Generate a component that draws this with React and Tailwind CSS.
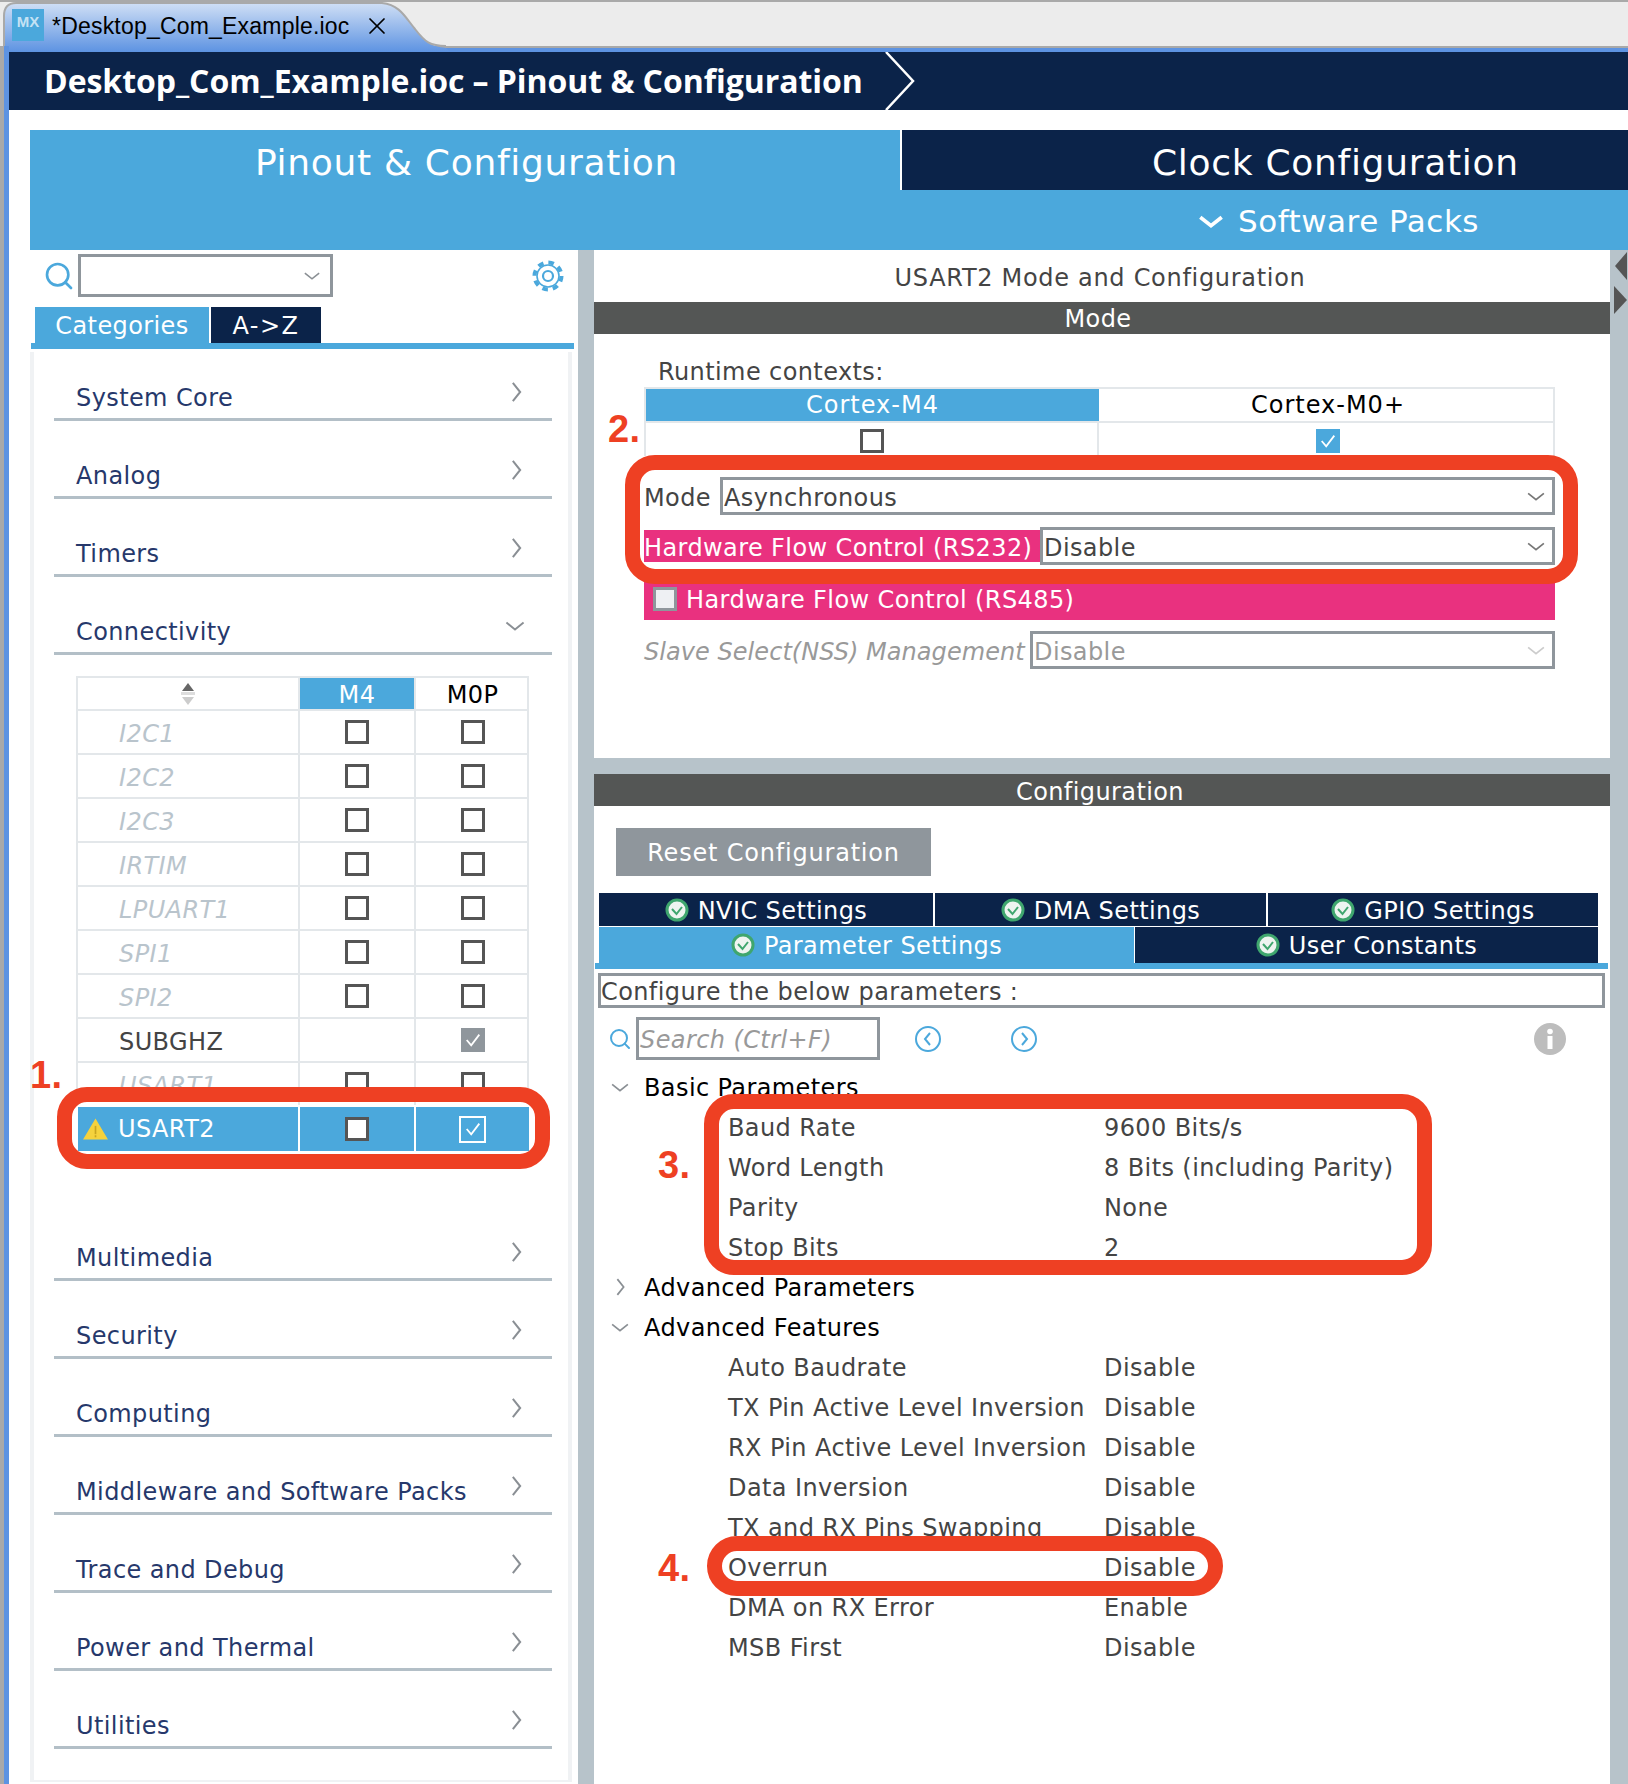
import React from "react";
import { Search, X } from "lucide-react";

/* small drawings */
function Chev({ dir = "right", className = "", color = "#8a8f94", sw = 2.2 }) {
  const d = {
    right: "M3 2 L11 12 L3 22",
    down: "M2 3 L12 11 L22 3",
  }[dir];
  const vb = dir === "right" ? "0 0 14 24" : "0 0 24 14";
  return (
    <svg viewBox={vb} className={className} fill="none" stroke={color} strokeWidth={sw}>
      <path d={d} />
    </svg>
  );
}

function Box({ state = "off", className = "" }) {
  if (state === "grey")
    return (
      <div className={`flex h-[24px] w-[24px] items-center justify-center bg-[#8f969c] ${className}`}>
        <Tick color="#fff" />
      </div>
    );
  if (state === "blue")
    return (
      <div className={`flex h-[24px] w-[24px] items-center justify-center bg-[#4ba8dc] ${className}`}>
        <Tick color="#fff" />
      </div>
    );
  if (state === "onblue")
    return (
      <div className={`flex h-[27px] w-[27px] items-center justify-center border-[2px] border-white ${className}`}>
        <Tick color="#fff" />
      </div>
    );
  return <div className={`h-[24px] w-[24px] border-[3px] border-[#555] ${className}`} />;
}

function Tick({ color }) {
  return (
    <svg viewBox="0 0 20 20" className="h-[18px] w-[18px]" fill="none" stroke={color} strokeWidth="2">
      <path d="M3 10 L8 16 L17 4" />
    </svg>
  );
}

function GreenOk() {
  return (
    <svg viewBox="0 0 24 24" className="h-[24px] w-[24px] shrink-0">
      <circle cx="12" cy="12" r="10" fill="#eef4f0" stroke="#3fa66e" strokeWidth="3" />
      <path d="M7 11 L11.5 16 L17 9" fill="none" stroke="#3fa66e" strokeWidth="2" />
    </svg>
  );
}

function NavDot({ left }) {
  return (
    <svg viewBox="0 0 28 28" className="h-[28px] w-[28px]" fill="none" stroke="#4ba8dc" strokeWidth="2">
      <circle cx="14" cy="14" r="12" />
      <path d={left ? "M16 8 L11 14 L16 20" : "M12 8 L17 14 L12 20"} />
    </svg>
  );
}

function Gear() {
  return (
    <svg viewBox="0 0 32 32" className="ml-auto h-[32px] w-[32px]" fill="none" stroke="#4ba8dc">
      <circle cx="16" cy="16" r="13.5" strokeWidth="4" strokeDasharray="5.6 5" />
      <circle cx="16" cy="16" r="11" strokeWidth="1.6" />
      <circle cx="16" cy="16" r="5" strokeWidth="2.2" />
    </svg>
  );
}

function Select({ value, className = "", textClass = "text-[#444]", chevColor = "#777" }) {
  return (
    <div className={`flex h-[38px] items-center justify-between border-[3px] border-[#8f969c] bg-white pl-[1px] pr-[6px] ${className}`}>
      <span className={`pt-[3px] ${textClass}`}>{value}</span>
      <Chev dir="down" className="h-[11px] w-[20px]" color={chevColor} />
    </div>
  );
}

function Category({ name, open, className = "" }) {
  return (
    <div className={`ml-[20px] mr-[16px] flex h-[69px] items-end justify-between border-b-[3px] border-[#b3bfc7] pb-[8px] pl-[22px] pr-[29px] ${className}`}>
      <span className="text-[#26386b]">{name}</span>
      {open ? (
        <Chev dir="down" className="-mr-[3px] mb-[12px] h-[12px] w-[22px]" />
      ) : (
        <Chev className="mb-[7px] h-[22px] w-[13px]" />
      )}
    </div>
  );
}

const peripherals = [
  ["I2C1", "off", "off"],
  ["I2C2", "off", "off"],
  ["I2C3", "off", "off"],
  ["IRTIM", "off", "off"],
  ["LPUART1", "off", "off"],
  ["SPI1", "off", "off"],
  ["SPI2", "off", "off"],
  ["SUBGHZ", null, "grey"],
  ["USART1", "off", "off"],
];

function PeripheralTable() {
  const cols = "grid w-[451px] grid-cols-[222px_116px_113px]";
  const cell = "flex items-center justify-center border-r-[2px] border-[#e3e7ea] last:border-r-0";
  return (
    <div className="ml-[42px] mt-[21px] w-[453px]">
      <div className="border-[2px] border-b-0 border-[#e3e7ea]">
        <div className={`${cols} h-[33px] border-b-[2px] border-[#e3e7ea]`}>
          <div className={cell}>
            <svg viewBox="0 0 18 24" className="h-[24px] w-[18px]">
              <path d="M9 1 L15 9 H3 Z" fill="#666" />
              <path d="M9 23 L15 15 H3 Z" fill="#ccc" />
              <rect x="2" y="10" width="14" height="3" fill="#ddd" />
            </svg>
          </div>
          <div className={`${cell} bg-[#4ba8dc] pt-[2px] text-white`}>M4</div>
          <div className={`${cell} pt-[2px] text-black`}>M0P</div>
        </div>
        {peripherals.map(([name, a, b]) => (
          <div key={name} className={`${cols} h-[44px] border-b-[2px] border-[#e3e7ea]`}>
            <div className={`${cell} !justify-start pl-[41px] pt-[3px] ${name === "SUBGHZ" ? "text-[#444]" : "italic text-[#b9c4cc]"}`}>
              {name}
            </div>
            <div className={cell}>{a && <Box state={a} />}</div>
            <div className={cell}>
              <Box state={b} />
            </div>
          </div>
        ))}
      </div>
      <div className={`${cols} ml-[2px] h-[44px] bg-[#4ba8dc] text-white shadow-[0_0_0_5px_#fff]`}>
        <div className={`${cell} !justify-start !border-white gap-[9px] pl-[4px]`}>
          <svg viewBox="0 0 26 22" className="h-[24px] w-[27px]">
            <path d="M13 1 L25 21 H1 Z" fill="#f5d23d" />
            <rect x="12.2" y="8" width="1.6" height="8" fill="#c9a520" />
            <rect x="12.2" y="17" width="1.6" height="2" fill="#c9a520" />
          </svg>
          <span>USART2</span>
        </div>
        <div className={`${cell} !border-white`}>
          <Box className="bg-white" />
        </div>
        <div className={cell}>
          <Box state="onblue" />
        </div>
      </div>
    </div>
  );
}

function TabBtn({ label, active, className = "" }) {
  return (
    <div className={`flex items-center justify-center gap-[9px] text-white ${active ? "bg-[#4ba8dc]" : "bg-[#0b2349]"} ${className}`}>
      <GreenOk />
      <span className="pt-[2px]">{label}</span>
    </div>
  );
}

function Group({ name, open }) {
  return (
    <div className="flex h-[40px] items-center text-black">
      <div className="flex w-[50px] justify-center pl-[2px]">
        {open ? <Chev dir="down" className="h-[11px] w-[20px]" /> : <Chev className="h-[20px] w-[11px]" />}
      </div>
      <span className="pt-[1px]">{name}</span>
    </div>
  );
}

function Param({ name, value }) {
  return (
    <div className="flex h-[40px] items-center pt-[1px] text-[#444]">
      <span className="ml-[134px] w-[376px]">{name}</span>
      <span>{value}</span>
    </div>
  );
}

function Annot({ className }) {
  return <div className={`pointer-events-none absolute rounded-[30px] border-[15px] border-[#ee4023] ${className}`} />;
}

function Num({ children, className }) {
  return (
    <div className={`pointer-events-none absolute font-['Liberation_Sans',sans-serif] text-[38px] font-bold leading-none text-[#ee4023] ${className}`}>
      {children}
    </div>
  );
}

export default function App() {
  return (
    <div className="relative h-[1784px] w-[1628px] overflow-hidden bg-white font-['DejaVu_Sans',sans-serif] text-[24px] leading-none tracking-[0.4px]">
      {/* editor tab */}
      <div className="relative h-[52px] border-t-[2px] border-[#a9a9a9] bg-[#ececec]">
        <div className="absolute inset-x-0 top-[44px] h-[6px] border-t-[2px] border-[#a9a9a9] bg-[#5d93e2]" />
        <svg viewBox="0 0 450 50" className="absolute left-0 top-0 h-[50px] w-[450px]">
          <defs>
            <linearGradient id="tabfill" x1="0" y1="0" x2="0" y2="1">
              <stop offset="0" stopColor="#d0dff5" />
              <stop offset="1" stopColor="#5d93e2" />
            </linearGradient>
          </defs>
          <path d="M4 50 V14 Q4 1 16 1 H382 C400 3 405 15 415 27 C425 40 430 44 446 46 L450 50 Z" fill="url(#tabfill)" />
          <path d="M4 46 V14 Q4 1 16 1 H382 C400 3 405 15 415 27 C425 40 430 44 446 44" fill="none" stroke="#a9a9a9" strokeWidth="2" />
        </svg>
        <div className="relative flex h-[46px] items-center pl-[12px] font-['Liberation_Sans',sans-serif] text-[23px] tracking-[0.2px] text-black">
          <div className="flex h-[32px] w-[32px] items-start justify-center bg-[#4ba8dc] pt-[5px] text-[15px] font-bold tracking-normal text-[#c4e2f4]">MX</div>
          <span className="ml-[8px] mt-[3px]">*Desktop_Com_Example.ioc</span>
          <X className="ml-[13px] mt-[1px] h-[28px] w-[28px]" strokeWidth={1.5} />
        </div>
      </div>

      <div className="absolute bottom-0 left-0 top-[46px] w-[9px] border-l-[4px] border-[#a9a9a9] bg-[#5d93e2]" />

      {/* breadcrumb */}
      <div className="relative ml-[9px] flex h-[58px] items-center bg-[#0b2349] pl-[35px] font-['Open_Sans',sans-serif] text-[32px] font-bold tracking-[-0.05px] text-white">
        <span>Desktop_Com_Example.ioc – Pinout &amp; Configuration</span>
        <svg viewBox="0 0 30 58" className="absolute left-[876px] top-0 h-[58px] w-[30px]" fill="none" stroke="#fff" strokeWidth="2.5">
          <path d="M1 0 L28 29 L1 58" />
        </svg>
      </div>

      <div className="ml-[30px] mt-[20px]">
        {/* perspective tabs */}
        <div className="h-[120px] bg-[#4ba8dc] text-[36px] tracking-[0.7px] text-white">
          <div className="flex h-[60px]">
            <div className="flex w-[872px] items-center justify-center border-r-[2px] border-white pl-[3px] pt-[6px]">Pinout &amp; Configuration</div>
            <div className="flex flex-1 items-center bg-[#0b2349] pl-[250px] pt-[6px]">Clock Configuration</div>
          </div>
          <div className="flex h-[60px] items-center justify-end gap-[14px] pr-[149px] pt-[2px] text-[31px] tracking-[0.5px]">
            <Chev dir="down" color="#fff" sw={3.4} className="h-[15px] w-[26px]" />
            <span>Software Packs</span>
          </div>
        </div>

        <div className="flex h-[1534px] bg-[#b7c3ca]">
          {/* left: categories */}
          <div className="w-[548px] bg-white">
            <div className="flex h-[57px] items-center pb-[6px] pl-[13px] pr-[14px]">
              <Search className="h-[32px] w-[32px] text-[#4ba8dc]" strokeWidth={2} />
              <div className="ml-[3px] flex h-[43px] w-[255px] items-center justify-end border-[3px] border-[#8f969c] pr-[8px]">
                <Chev dir="down" className="h-[10px] w-[20px]" />
              </div>
              <Gear />
            </div>
            <div className="flex h-[36px] pl-[5px] text-white">
              <div className="flex w-[174px] items-center justify-center bg-[#4ba8dc] pt-[2px]">Categories</div>
              <div className="ml-[2px] flex w-[110px] items-center justify-center bg-[#0b2349] pt-[2px] tracking-[1.5px]">A-&gt;Z</div>
            </div>
            <div className="ml-[1px] mr-[4px] h-[6px] bg-[#4ba8dc]" />
            <div className="mr-[6px] mt-[3px] h-[1430px] border-x-[4px] border-b-[2px] border-[#f0f2f4] pr-0">
              <div className="flex flex-col gap-[9px]">
                <Category name="System Core" />
                <Category name="Analog" />
                <Category name="Timers" />
                <div className="mb-[52px]">
                  <Category name="Connectivity" open />
                  <PeripheralTable />
                </div>
                <Category name="Multimedia" />
                <Category name="Security" />
                <Category name="Computing" />
                <Category name="Middleware and Software Packs" />
                <Category name="Trace and Debug" />
                <Category name="Power and Thermal" />
                <Category name="Utilities" />
              </div>
            </div>
          </div>

          {/* right: mode and configuration */}
          <div className="ml-[16px] flex w-[1016px] flex-col gap-[16px]">
            <div className="h-[508px] bg-white">
              <div className="flex h-[52px] items-center justify-center pr-[4px] pt-[4px] tracking-[0.7px] text-[#444]">USART2 Mode and Configuration</div>
              <div className="flex h-[32px] items-center justify-center bg-[#545655] pr-[8px] pt-[2px] text-white">Mode</div>
              <div className="pl-[50px]">
                <div className="flex h-[53px] items-end pb-[3px] pl-[14px] text-[#444]">Runtime contexts:</div>
                <div className="w-[911px]">
                  <div className="grid h-[34px] grid-cols-[453px_458px] border-[2px] border-b-0 border-[#e3e7ea]">
                    <div className="flex items-center justify-center bg-[#4ba8dc] tracking-[1px] text-white">Cortex-M4</div>
                    <div className="flex items-center justify-center tracking-[1px] text-black">Cortex-M0+</div>
                  </div>
                  <div className="grid h-[35px] grid-cols-[453px_458px] border-x-[2px] border-t-[2px] border-[#e3e7ea]">
                    <div className="flex items-center justify-center border-r-[2px] border-[#e3e7ea] pt-[3px]">
                      <Box />
                    </div>
                    <div className="flex items-center justify-center pt-[3px]">
                      <Box state="blue" />
                    </div>
                  </div>
                </div>
                <div className="mt-[21px] flex w-[911px] items-center text-[#444]">
                  <span className="w-[76px] pt-[3px]">Mode</span>
                  <Select value="Asynchronous" className="flex-1" />
                </div>
                <div className="mt-[12px] flex w-[911px] items-center">
                  <span className="flex h-[32px] w-[396px] items-center whitespace-nowrap bg-[#e9317f] pt-[3px] text-white">Hardware Flow Control (RS232)</span>
                  <Select value="Disable" className="flex-1" />
                </div>
                <div className="mt-[13px] flex h-[42px] w-[911px] items-center gap-[9px] bg-[#e9317f] pl-[9px] text-white">
                  <div className="h-[24px] w-[24px] border-[3px] border-[#8f969c] bg-[#eef0f3]" />
                  <span className="pt-[2px]">Hardware Flow Control (RS485)</span>
                </div>
                <div className="mt-[11px] flex w-[911px] items-center">
                  <span className="w-[386px] whitespace-nowrap pt-[3px] italic tracking-[0.05px] text-[#999]">Slave Select(NSS) Management</span>
                  <Select value="Disable" className="flex-1" textClass="text-[#999]" chevColor="#ccc" />
                </div>
              </div>
            </div>

            <div className="flex-1 bg-white">
              <div className="flex h-[32px] items-center justify-center bg-[#545655] pr-[4px] pt-[3px] text-white">Configuration</div>
              <div className="ml-[22px] mt-[22px] flex h-[48px] w-[315px] items-center justify-center bg-[#8f969c] pt-[2px] tracking-[0.8px] text-white">Reset Configuration</div>
              <div className="mt-[17px] flex gap-[2px] pl-[5px]">
                <TabBtn label="NVIC Settings" className="h-[33px] w-[334px]" />
                <TabBtn label="DMA Settings" className="h-[33px] w-[331px]" />
                <TabBtn label="GPIO Settings" className="h-[33px] w-[330px]" />
              </div>
              <div className="mt-[1px] flex gap-[1px] pl-[5px]">
                <TabBtn label="Parameter Settings" active className="h-[36px] w-[535px]" />
                <TabBtn label="User Constants" className="h-[36px] w-[463px]" />
              </div>
              <div className="ml-[1px] h-[6px] w-[1013px] bg-[#4ba8dc]" />
              <div className="ml-[4px] mt-[4px] flex h-[35px] w-[1007px] items-center border-[3px] border-[#8f969c] pt-[2px] text-[#444]">Configure the below parameters :</div>
              <div className="mt-[9px] flex items-center pl-[14px]">
                <Search className="h-[24px] w-[24px] text-[#4ba8dc]" strokeWidth={2} />
                <div className="ml-[4px] flex h-[43px] w-[244px] items-center border-[3px] border-[#8f969c] pl-[1px] pt-[2px] italic text-[#999]">Search (Ctrl+F)</div>
                <div className="ml-[34px]">
                  <NavDot left />
                </div>
                <div className="ml-[68px]">
                  <NavDot />
                </div>
                <svg viewBox="0 0 32 32" className="ml-[496px] h-[32px] w-[32px]">
                  <circle cx="16" cy="16" r="16" fill="#bdbdbd" />
                  <circle cx="16" cy="8.5" r="2.8" fill="#fff" />
                  <rect x="13.5" y="13" width="5" height="13" fill="#fff" />
                </svg>
              </div>
              <div className="mt-[7px]">
                <Group name="Basic Parameters" open />
                <Param name="Baud Rate" value="9600 Bits/s" />
                <Param name="Word Length" value="8 Bits (including Parity)" />
                <Param name="Parity" value="None" />
                <Param name="Stop Bits" value="2" />
                <Group name="Advanced Parameters" />
                <Group name="Advanced Features" open />
                <Param name="Auto Baudrate" value="Disable" />
                <Param name="TX Pin Active Level Inversion" value="Disable" />
                <Param name="RX Pin Active Level Inversion" value="Disable" />
                <Param name="Data Inversion" value="Disable" />
                <Param name="TX and RX Pins Swapping" value="Disable" />
                <Param name="Overrun" value="Disable" />
                <Param name="DMA on RX Error" value="Enable" />
                <Param name="MSB First" value="Disable" />
              </div>
            </div>
          </div>

          {/* collapse arrows */}
          <div className="flex flex-col gap-[6px] pl-[3px] pt-[2px]">
            <svg viewBox="0 0 14 28" className="h-[28px] w-[14px]"><path d="M14 0 L2 14 L14 28 Z" fill="#555" /></svg>
            <svg viewBox="0 0 14 28" className="h-[28px] w-[14px]"><path d="M1 0 L14 14 L1 28 Z" fill="#555" /></svg>
          </div>
        </div>
      </div>

      {/* annotations */}
      <Annot className="left-[57px] top-[1087px] h-[82px] w-[493px]" />
      <Annot className="left-[625px] top-[455px] h-[129px] w-[953px]" />
      <Annot className="left-[704px] top-[1094px] h-[181px] w-[728px]" />
      <Annot className="left-[707px] top-[1536px] h-[60px] w-[516px]" />
      <Num className="left-[30px] top-[1056px]">1.</Num>
      <Num className="left-[608px] top-[410px]">2.</Num>
      <Num className="left-[658px] top-[1146px]">3.</Num>
      <Num className="left-[658px] top-[1549px]">4.</Num>
    </div>
  );
}
